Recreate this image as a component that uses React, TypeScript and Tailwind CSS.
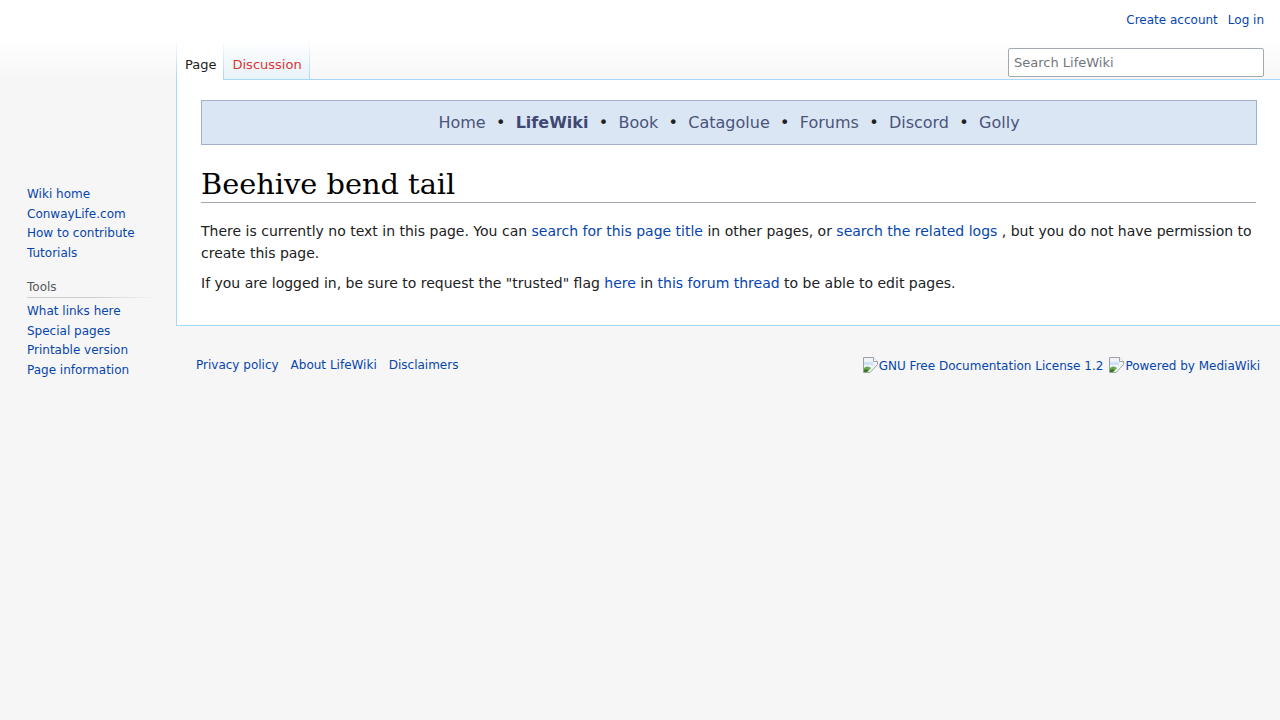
import React from "react";

const sidebarMain = ["Wiki home", "ConwayLife.com", "How to contribute", "Tutorials"];
const sidebarTools = ["What links here", "Special pages", "Printable version", "Page information"];
const navItems = ["Home", "LifeWiki", "Book", "Catagolue", "Forums", "Discord", "Golly"];

const BrokenImage = () => (
  <svg width="16" height="16" viewBox="0 0 16 16" className="inline-block align-[-3px]">
    <path d="M0.5 15.5V0.5h10l4 4v3L7 15.5z" fill="#eef4fa" stroke="#a0a0a0" />
    <path d="M10.5 0.5v4h4" fill="#fff" stroke="#a0a0a0" />
    <path d="M1 5h9v3H1z" fill="#cfe2f3" />
    <path d="M1 15V11c2-2 4-2 7 0l-3.5 4z" fill="#6aa84f" />
    <path d="M1 15v-2c1.5-1 3-1 4.5 0L3.5 15z" fill="#38761d" />
  </svg>
);

export default function App() {
  return (
    <div className="min-h-screen bg-[#f6f6f6] font-['DejaVu_Sans',sans-serif] text-[#202122]">
      {/* header */}
      <div className="h-[80px] bg-linear-to-b from-white from-50% to-[#f6f6f6]">
        <div className="flex h-[40px] justify-end gap-[10px] pr-[16px] pt-[13px] text-[12px] leading-[14px]">
          <a className="text-[#0645ad]">Create account</a>
          <a className="text-[#0645ad]">Log in</a>
        </div>
        <div className="flex h-[40px]">
          <div className="w-[176px] shrink-0" />
          <div className="w-px bg-linear-to-b from-white/0 to-[#a7d7f9]" />
          <div className="relative z-10 h-[40px] bg-white pl-[8px] pr-[7px] pt-[18px] text-[13px] leading-[14px]">
            Page
          </div>
          <div className="w-px bg-linear-to-b from-white/0 to-[#a7d7f9]" />
          <div className="h-[40px] bg-linear-to-b from-white to-[#e8f2f8] pl-[8px] pr-[7px] pt-[18px] text-[13px] leading-[14px] text-[#dd3333]">
            Discussion
          </div>
          <div className="w-px bg-linear-to-b from-white/0 to-[#a7d7f9]" />
          <div className="flex-1" />
          <div className="mr-[16px] mt-[8px] flex h-[29px] w-[256px] items-center rounded-[2px] border border-[#a2a9b1] bg-white px-[5px] text-[13px] text-[#72777d]">
            Search LifeWiki
          </div>
        </div>
      </div>

      <div className="flex">
        {/* sidebar */}
        <div className="w-[176px] shrink-0 pl-[27px] pr-[20px] pt-[105px] text-[12px]">
          <ul>
            {sidebarMain.map((l) => (
              <li key={l} className="py-[3px] leading-[13.5px] text-[#0645ad]">
                {l}
              </li>
            ))}
          </ul>
          <div className="mt-[16px] pb-[2px] leading-[16px] text-[#54595d]">Tools</div>
          <div className="h-px bg-linear-to-r from-[#c8ccd1] via-[#c8ccd1] to-[#c8ccd1]/0" />
          <ul className="pt-[4px]">
            {sidebarTools.map((l) => (
              <li key={l} className="py-[3px] leading-[13.5px] text-[#0645ad]">
                {l}
              </li>
            ))}
          </ul>
        </div>

        {/* main */}
        <div className="-mt-px flex-1">
          <div className="border-y border-l border-[#a7d7f9] bg-white px-[24px] pb-[24px] pt-[20px]">
            <div className="-mr-[1px] border border-[#a3b1c8] bg-[#dbe6f5] py-[10px] text-center text-[16px] leading-[23px]">
              {navItems.map((n, i) => (
                <span key={n}>
                  {i > 0 && <span className="mx-[10.3px] text-[#202122]">•</span>}
                  <a className={n === "LifeWiki" ? "font-bold text-[#3e4872]" : "text-[#4a5479]"}>{n}</a>
                </span>
              ))}
            </div>
            <h1 className="mt-[21px] border-b border-[#a2a9b1] font-['DejaVu_Serif',serif] text-[28.8px] leading-[36px] text-black">
              Beehive bend tail
            </h1>
            <div className="mt-[17px] text-[14px] leading-[22.4px]">
              <p>
                There is currently no text in this page. You can{" "}
                <a className="text-[#0645ad]">search for this page title</a> in other pages, or{" "}
                <a className="text-[#0645ad]">search the related logs</a> , but you do not have permission to
                create this page.
              </p>
              <p className="my-[7px]">
                If you are logged in, be sure to request the "trusted" flag{" "}
                <a className="text-[#0645ad]">here</a> in <a className="text-[#0645ad]">this forum thread</a> to
                be able to edit pages.
              </p>
            </div>
          </div>

          <div className="flex justify-between px-[20px] pt-[31px] text-[12px] leading-[17px]">
            <div className="flex gap-[12px] text-[#0645ad]">
              <a>Privacy policy</a>
              <a>About LifeWiki</a>
              <a>Disclaimers</a>
            </div>
            <div className="flex gap-[6px] text-[#0645ad]">
              <a>
                <BrokenImage />
                GNU Free Documentation License 1.2
              </a>
              <a>
                <BrokenImage />
                Powered by MediaWiki
              </a>
            </div>
          </div>
        </div>
      </div>
    </div>
  );
}
